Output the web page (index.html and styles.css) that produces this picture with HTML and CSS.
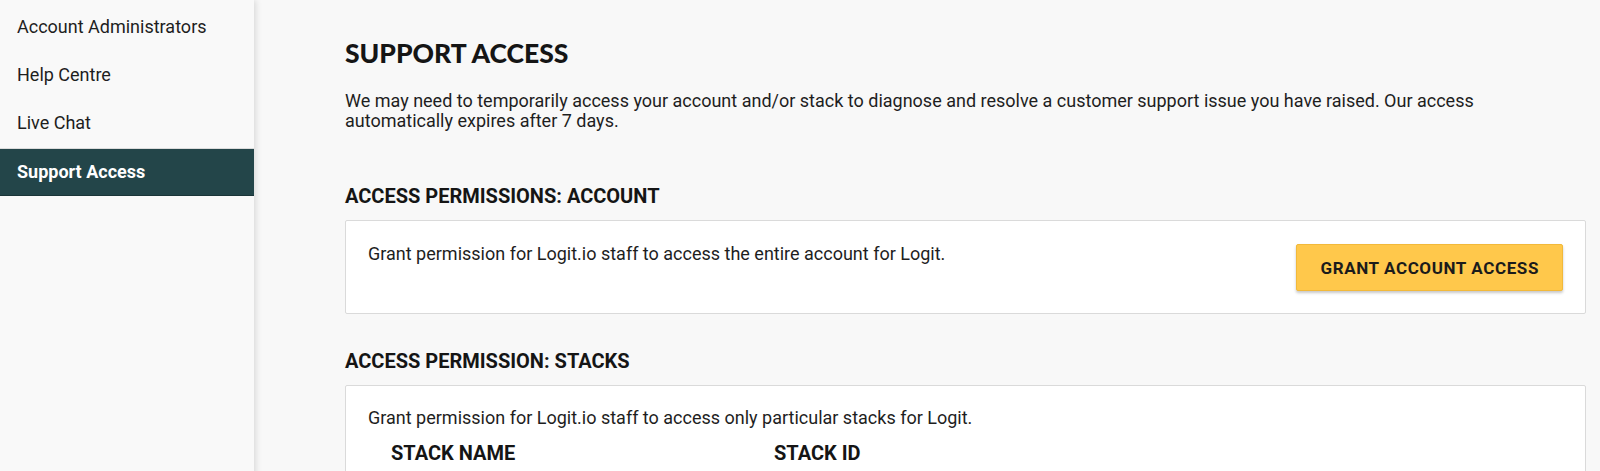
FILE: index.html
```html
<!DOCTYPE html>
<html lang="en">
<head>
<meta charset="utf-8">
<title>Support Access</title>
<link rel="stylesheet" href="styles.css">
</head>
<body>
<div class="layout">
  <nav class="sidebar">
    <ul class="nav-list">
      <li class="nav-item">Account Administrators</li>
      <li class="nav-item">Help Centre</li>
      <li class="nav-item">Live Chat</li>
      <li class="nav-item active">Support Access</li>
    </ul>
  </nav>
  <main class="main">
    <h1 class="page-title">SUPPORT ACCESS</h1>
    <p class="intro">We may need to temporarily access your account and/or stack to diagnose and resolve a customer support issue you have raised. Our access automatically expires after 7 days.</p>

    <h2 class="section-title section-first">ACCESS PERMISSIONS: ACCOUNT</h2>
    <div class="card card-row">
      <p class="card-text">Grant permission for Logit.io staff to access the entire account for Logit.</p>
      <button class="btn-grant" type="button">GRANT ACCOUNT ACCESS</button>
    </div>

    <h2 class="section-title section-second">ACCESS PERMISSION: STACKS</h2>
    <div class="card card-stacks">
      <p class="card-text">Grant permission for Logit.io staff to access only particular stacks for Logit.</p>
      <div class="stack-table">
        <div class="stack-head">STACK NAME</div>
        <div class="stack-head">STACK ID</div>
      </div>
    </div>
  </main>
</div>
</body>
</html>
```

FILE: styles.css
```css
* {
  box-sizing: border-box;
}

html, body {
  margin: 0;
  padding: 0;
  height: 100%;
}

body {
  font-family: Roboto, "Liberation Sans", Arial, sans-serif;
  color: #1c1c1c;
  background: #f8f8f8;
  overflow: hidden;
}

.layout {
  display: flex;
  min-height: 100vh;
}

.sidebar {
  width: 254px;
  flex: 0 0 254px;
  background: #f9f9f9;
  box-shadow: 2px 0 6px rgba(0, 0, 0, 0.12);
  position: relative;
  z-index: 1;
}

.nav-list {
  list-style: none;
  margin: 3px 0 0;
  padding: 0;
}

.nav-item {
  height: 48px;
  line-height: 48px;
  padding-left: 17px;
  font-size: 18px;
  color: #1e1e1e;
}

.nav-item.active {
  margin-top: 1px;
  background: #234549;
  color: #ffffff;
  font-weight: 700;
  border-top: 1px solid #dcdcdc;
  border-bottom: 1px solid #1a3538;
  line-height: 46px;
}

.main {
  flex: 1;
  padding: 0 14px 0 91px;
}

.page-title {
  margin: 37px 0 0;
  font-family: Lato, "Noto Sans", sans-serif;
  font-weight: 900;
  font-size: 26.5px;
  line-height: 32px;
  color: #151515;
}

.intro {
  margin: 22px 0 0;
  font-size: 18px;
  line-height: 20px;
  color: #1e1e1e;
}

.section-title {
  margin: 0;
  font-size: 20px;
  font-weight: 700;
  line-height: 24px;
  color: #151515;
}

.section-first {
  margin-top: 53px;
}

.section-second {
  margin-top: 35px;
}

.card {
  margin-top: 12px;
  background: #ffffff;
  border: 1px solid #dadada;
  border-radius: 2px;
}

.card-row {
  display: flex;
  justify-content: space-between;
  align-items: flex-start;
  padding: 23px 22px 22px 22px;
}

.card-text {
  margin: 0;
  font-size: 18px;
  line-height: 20px;
  color: #1e1e1e;
}

.btn-grant {
  height: 47px;
  padding: 0 23px;
  font-family: Roboto, "Liberation Sans", Arial, sans-serif;
  font-size: 17px;
  font-weight: 700;
  letter-spacing: 0.6px;
  color: #1b1b1b;
  background: #ffc84b;
  border: 1px solid #f2b93a;
  border-radius: 2px;
  box-shadow: 0 2px 3px rgba(0, 0, 0, 0.22);
}

.card-stacks {
  padding: 22px 22px 40px 22px;
}

.stack-table {
  display: grid;
  grid-template-columns: 383px 1fr;
  margin-top: 13px;
  padding-left: 23px;
}

.stack-head {
  font-size: 20px;
  font-weight: 700;
  line-height: 24px;
  color: #151515;
}
```
